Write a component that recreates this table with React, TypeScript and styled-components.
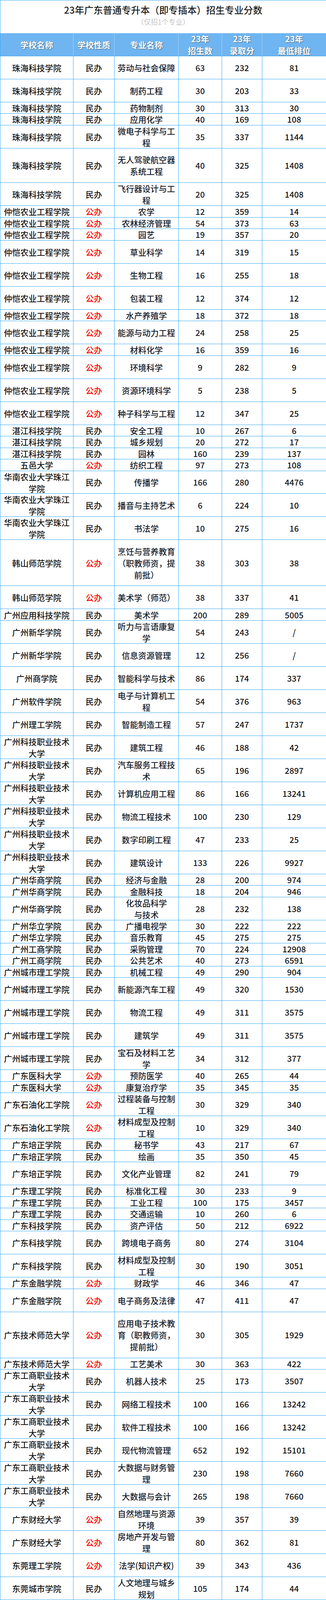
import React from 'react';
import styled, { createGlobalStyle } from 'styled-components';

// [学校名称, 学校性质, 专业名称, 招生数, 录取分, 最低排位, 行高(30px 为一格)]
type Item = [string, string, string, string, string, string, number];

const ZH = '珠海科技学院';
const ZK = '仲恺农业工程学院';
const ZJ = '湛江科技学院';
const HN = '华南农业大学珠江学院';
const GK = '广州科技职业技术大学';
const CS = '广州城市理工学院';
const GS = '广东工商职业技术大学';

const rows: Item[] = [
  [ZH, '民办', '劳动与社会保障', '63', '232', '81', 2],
  [ZH, '民办', '制药工程', '30', '203', '33', 2],
  [ZH, '民办', '药物制剂', '30', '313', '30', 1],
  [ZH, '民办', '应用化学', '40', '169', '108', 1],
  [ZH, '民办', '微电子科学与工程', '35', '337', '1144', 2],
  [ZH, '民办', '无人驾驶航空器系统工程', '40', '325', '1408', 3],
  [ZH, '民办', '飞行器设计与工程', '20', '325', '1408', 2],
  [ZK, '公办', '农学', '12', '359', '14', 1],
  [ZK, '公办', '农林经济管理', '54', '373', '63', 1],
  [ZK, '公办', '园艺', '19', '357', '20', 1],
  [ZK, '公办', '草业科学', '14', '319', '15', 2],
  [ZK, '公办', '生物工程', '16', '255', '18', 2],
  [ZK, '公办', '包装工程', '12', '374', '12', 2],
  [ZK, '公办', '水产养殖学', '18', '372', '18', 1],
  [ZK, '公办', '能源与动力工程', '24', '258', '25', 2],
  [ZK, '公办', '材料化学', '16', '359', '16', 1],
  [ZK, '公办', '环境科学', '9', '282', '9', 2],
  [ZK, '公办', '资源环境科学', '5', '238', '5', 2],
  [ZK, '公办', '种子科学与工程', '12', '347', '25', 2],
  [ZJ, '民办', '安全工程', '10', '267', '6', 1],
  [ZJ, '民办', '城乡规划', '20', '272', '17', 1],
  [ZJ, '民办', '园林', '160', '239', '137', 1],
  ['五邑大学', '公办', '纺织工程', '97', '273', '108', 1],
  [HN, '民办', '传播学', '166', '280', '4476', 2],
  [HN, '民办', '播音与主持艺术', '6', '224', '10', 2],
  [HN, '民办', '书法学', '10', '275', '16', 2],
  ['韩山师范学院', '公办', '烹饪与营养教育（职教师资，提前批）', '38', '303', '38', 4],
  ['韩山师范学院', '公办', '美术学（师范）', '38', '337', '41', 2],
  ['广州应用科技学院', '民办', '美术学', '200', '289', '5005', 1],
  ['广州新华学院', '民办', '听力与言语康复学', '54', '243', '/', 2],
  ['广州新华学院', '民办', '信息资源管理', '12', '256', '/', 2],
  ['广州商学院', '民办', '智能科学与技术', '86', '174', '337', 2],
  ['广州软件学院', '民办', '电子与计算机工程', '54', '376', '963', 2],
  ['广州理工学院', '民办', '智能制造工程', '57', '247', '1737', 2],
  [GK, '民办', '建筑工程', '46', '188', '42', 2],
  [GK, '民办', '汽车服务工程技术', '65', '196', '2897', 2],
  [GK, '民办', '计算机应用工程', '86', '166', '13241', 2],
  [GK, '民办', '物流工程技术', '100', '230', '129', 2],
  [GK, '民办', '数字印刷工程', '47', '233', '25', 2],
  [GK, '民办', '建筑设计', '133', '226', '9927', 2],
  ['广州华商学院', '民办', '经济与金融', '28', '200', '974', 1],
  ['广州华商学院', '民办', '金融科技', '18', '204', '946', 1],
  ['广州华商学院', '民办', '化妆品科学\n与技术', '28', '232', '138', 2],
  ['广州华立学院', '民办', '广播电视学', '30', '222', '222', 1],
  ['广州华立学院', '民办', '音乐教育', '45', '275', '275', 1],
  ['广州工商学院', '民办', '采购管理', '70', '224', '12908', 1],
  ['广州工商学院', '民办', '公共艺术', '40', '273', '6591', 1],
  [CS, '民办', '机械工程', '49', '290', '904', 1],
  [CS, '民办', '新能源汽车工程', '49', '320', '1530', 2],
  [CS, '民办', '物流工程', '49', '311', '3575', 2],
  [CS, '民办', '建筑学', '49', '311', '3575', 2],
  [CS, '民办', '宝石及材料工艺学', '34', '312', '377', 2],
  ['广东医科大学', '公办', '预防医学', '40', '265', '44', 1],
  ['广东医科大学', '公办', '康复治疗学', '35', '345', '35', 1],
  ['广东石油化工学院', '公办', '过程装备与控制工程', '30', '329', '340', 2],
  ['广东石油化工学院', '公办', '材料成型及控制工程', '10', '329', '340', 2],
  ['广东培正学院', '民办', '秘书学', '43', '217', '67', 1],
  ['广东培正学院', '民办', '绘画', '35', '350', '45', 1],
  ['广东培正学院', '民办', '文化产业管理', '82', '241', '79', 2],
  ['广东理工学院', '民办', '标准化工程', '30', '233', '9', 1],
  ['广东理工学院', '民办', '工业工程', '100', '175', '3457', 1],
  ['广东理工学院', '民办', '交通运输', '10', '260', '6', 1],
  ['广东科技学院', '民办', '资产评估', '50', '212', '6922', 1],
  ['广东科技学院', '民办', '跨境电子商务', '80', '274', '3104', 2],
  ['广东科技学院', '民办', '材料成型及控制工程', '30', '190', '3051', 2],
  ['广东金融学院', '公办', '财政学', '46', '346', '47', 1],
  ['广东金融学院', '公办', '电子商务及法律', '47', '411', '47', 2],
  ['广东技术师范大学', '公办', '应用电子技术教育（职教师资，提前批）', '30', '305', '1929', 4],
  ['广东技术师范大学', '公办', '工艺美术', '30', '363', '422', 1],
  [GS, '民办', '机器人技术', '25', '173', '3507', 2],
  [GS, '民办', '网络工程技术', '100', '166', '13242', 2],
  [GS, '民办', '软件工程技术', '100', '166', '13242', 2],
  [GS, '民办', '现代物流管理', '652', '192', '15101', 2],
  [GS, '民办', '大数据与财务管理', '230', '198', '7660', 2],
  [GS, '民办', '大数据与会计', '265', '198', '7660', 2],
  ['广东财经大学', '公办', '自然地理与资源环境', '39', '357', '39', 2],
  ['广东财经大学', '公办', '房地产开发与管理', '80', '362', '81', 2],
  ['东莞理工学院', '公办', '法学(知识产权)', '39', '343', '436', 2],
  ['东莞城市学院', '民办', '人文地理与城乡规划', '105', '174', '44', 2],
];

const GlobalStyle = createGlobalStyle`
  html, body {
    margin: 0;
    padding: 0;
    background: #fff;
    overflow: hidden;
  }
  body {
    font-family: "Noto Sans CJK SC", "Noto Sans", sans-serif;
  }
`;

const LINE = '#35a7f0';
const COLS = '188fr 105fr 164fr 111fr 103fr 163fr';

// the sheet fills the window; every band grows in proportion to its height in the sheet
const Sheet = styled.div`
  width: 100%;
  height: 100vh;
  display: flex;
  flex-direction: column;
  overflow: hidden;
`;

const TitleBox = styled.div`
  flex: 77 1 0;
  min-height: 0;
  box-sizing: border-box;
  border-top: 1px solid ${LINE};
  border-left: 1px solid ${LINE};
  display: flex;
  flex-direction: column;
  align-items: center;
  justify-content: center;
  padding-bottom: 8px;
`;

const Title = styled.div`
  font-size: 24px;
  line-height: 32px;
  font-weight: 500;
  color: #1e1e1e;
`;

const SubTitle = styled.div`
  font-size: 18px;
  line-height: 28px;
  font-weight: 300;
  color: #a8a8a8;
`;

const Row = styled.div<{ $units: number }>`
  flex: ${p => p.$units * 30} 1 0;
  min-height: 0;
  display: grid;
  grid-template-columns: ${COLS};
  grid-template-rows: minmax(0, 1fr);
`;

const HeadRow = styled(Row)`
  background: #6fb5f2;
`;

const HeadCell = styled.div`
  display: flex;
  align-items: center;
  justify-content: center;
  text-align: center;
  box-sizing: border-box;
  min-height: 0;
  min-width: 0;
  white-space: pre-line;
  border-right: 1px solid #a9d5f8;
  border-bottom: 1px solid ${LINE};
  font-size: 21px;
  line-height: 30px;
  font-weight: 700;
  color: #fff;
  text-shadow: 1px 1px 2px rgba(60, 60, 60, 0.75);
  &:first-child {
    border-left: 1px solid ${LINE};
  }
  &:last-child {
    border-right: none;
  }
`;

const Cell = styled.div<{ $color?: string }>`
  display: flex;
  align-items: center;
  justify-content: center;
  text-align: center;
  box-sizing: border-box;
  min-height: 0;
  min-width: 0;
  padding: 0 3px;
  border-right: 1px solid ${LINE};
  border-bottom: 1px solid ${LINE};
  font-size: 21px;
  line-height: 30px;
  font-weight: 500;
  white-space: pre-line;
  color: ${p => p.$color || '#161616'};
  &:first-child {
    border-left: 1px solid ${LINE};
  }
  &:last-child {
    border-right: none;
  }
`;

const headers = ['学校名称', '学校性质', '专业名称', '23年\n招生数', '23年\n录取分', '23年\n最低排位'];

export default function App() {
  return (
    <>
      <GlobalStyle />
      <Sheet>
        <TitleBox>
          <Title>23年广东普通专升本（即专插本）招生专业分数</Title>
          <SubTitle>（仅招1个专业）</SubTitle>
        </TitleBox>
        <HeadRow $units={2}>
          {headers.map(h => (
            <HeadCell key={h}>{h}</HeadCell>
          ))}
        </HeadRow>
        {rows.map(([school, kind, major, count, score, rank, units], i) => (
          <Row key={i} $units={units}>
            <Cell>{school}</Cell>
            <Cell $color={kind === '公办' ? '#ff0000' : undefined}>{kind}</Cell>
            <Cell $color="#17202b">{major}</Cell>
            <Cell $color="#17202b">{count}</Cell>
            <Cell>{score}</Cell>
            <Cell>{rank}</Cell>
          </Row>
        ))}
      </Sheet>
    </>
  );
}
